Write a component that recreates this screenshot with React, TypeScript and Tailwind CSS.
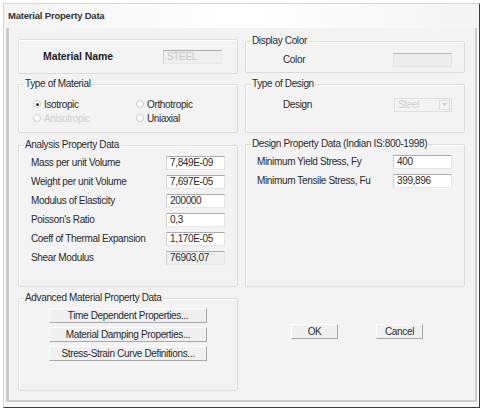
import type { ReactNode } from 'react';

const font = { fontFamily: '"Liberation Sans", Arial, sans-serif' };

function Group({ title, className, children }: { title: string; className: string; children: ReactNode }) {
  return (
    <fieldset className={`border border-[#dcdcdc] rounded-[2px] shadow-[inset_1px_1px_0_#ffffff] ${className}`}>
      <legend className="ml-[5px] px-[1px] leading-[12px] text-[#2a2a2a]">{title}</legend>
      {children}
    </fieldset>
  );
}

function Field({ value, disabled, gray }: { value: string; disabled?: boolean; gray?: boolean }) {
  return (
    <div
      className={`w-[59px] h-[14px] border border-[#e6e6e6] border-t-[#ababab] border-l-[#d2d2d2] pl-[3px] leading-[12px] ${
        gray ? 'bg-[#efefef]' : 'bg-white'
      } ${disabled ? 'text-[#c8c8c8]' : 'text-[#2a2a2a]'}`}
    >
      {value}
    </div>
  );
}

function Radio({ label, checked, disabled }: { label: string; checked?: boolean; disabled?: boolean }) {
  return (
    <div className="flex items-center h-[14px]">
      <span className="w-[8px] h-[8px] rounded-full border border-[#cacaca] bg-white flex items-center justify-center">
        {checked && <span className="w-[3px] h-[3px] rounded-full bg-[#333]" />}
      </span>
      <span className={`ml-[3px] ${disabled ? 'text-[#d0d0d0]' : 'text-[#2a2a2a]'}`}>{label}</span>
    </div>
  );
}

function Button({ label, className }: { label: string; className: string }) {
  return (
    <div
      className={`h-[15px] flex items-center justify-center bg-[#f0f0f0] border border-[#ffffff] border-r-[#a8a8a8] border-b-[#a8a8a8] text-[#2a2a2a] ${className}`}
    >
      {label}
    </div>
  );
}

const analysis = [
  { label: 'Mass per unit Volume', value: '7,849E-09' },
  { label: 'Weight per unit Volume', value: '7,697E-05' },
  { label: 'Modulus of Elasticity', value: '200000' },
  { label: "Poisson's Ratio", value: '0,3' },
  { label: 'Coeff of Thermal Expansion', value: '1,170E-05' },
];

export default function App() {
  return (
    <div className="w-[485px] h-[410px] bg-white pt-[3px] pl-[3px] pr-[5px] pb-[2px] text-[10px] tracking-[-0.35px]" style={font}>
      <div className="h-full flex flex-col border-l border-t border-[#d6d6d6] border-r border-r-[#3c3c3c] border-b border-b-[#3c3c3c] bg-[#f8f8f8]">
        <div className="h-[24px] flex items-center pl-[4px] pt-[1px] bg-gradient-to-r from-[#f4f4f4] via-[#ffffff] to-[#f4f4f4]">
          <span className="font-bold text-[9.5px] tracking-[-0.2px] text-[#333333]">Material Property Data</span>
        </div>
        <div className="flex-1 px-[2px] pb-[5px] flex">
          <div className="flex-1 flex border-l-[3px] border-r-[2px] border-b-[2px] border-[#cbcbcb] bg-[#f3f3f3] pl-[9px] gap-[7px]">
            {/* left column */}
            <div className="w-[220px] flex flex-col">
              <div className="mt-[11px] h-[35px] border border-[#dcdcdc] rounded-[2px] shadow-[inset_1px_1px_0_#ffffff] flex items-center">
                <span className="ml-[24px] w-[120px] font-bold text-[10.5px] tracking-[-0.1px] text-[#1e1e1e]">Material Name</span>
                <Field value="STEEL" disabled gray />
              </div>
              <Group title="Type of Material" className="mt-[4px] h-[55px]">
                <div className="grid grid-cols-[103px_1fr] pl-[14px] pt-[7px]">
                  <Radio label="Isotropic" checked />
                  <Radio label="Orthotropic" />
                  <Radio label="Anisotropic" disabled />
                  <Radio label="Uniaxial" />
                </div>
              </Group>
              <Group title="Analysis Property Data" className="mt-[6px] h-[148px]">
                <div className="flex flex-col pl-[12px] pt-[2px]">
                  {analysis.map((row) => (
                    <div key={row.label} className="flex items-center h-[19px]">
                      <span className="w-[135px] text-[#2a2a2a]">{row.label}</span>
                      <Field value={row.value} />
                    </div>
                  ))}
                  <div className="flex items-center h-[19px]">
                    <span className="w-[135px] text-[#2a2a2a]">Shear Modulus</span>
                    <Field value="76903,07" gray />
                  </div>
                </div>
              </Group>
              <Group title="Advanced Material Property Data" className="mt-[5px] h-[99px]">
                <div className="flex flex-col gap-[4px] pl-[30px] pt-[4px]">
                  <Button label="Time Dependent Properties..." className="w-[158px]" />
                  <Button label="Material Damping Properties..." className="w-[158px]" />
                  <Button label="Stress-Strain Curve Definitions..." className="w-[158px]" />
                </div>
              </Group>
            </div>
            {/* right column */}
            <div className="w-[220px] flex flex-col">
              <Group title="Display Color" className="mt-[7px] h-[38px]">
                <div className="flex items-center pl-[37px] pt-[5px]">
                  <span className="w-[110px] text-[#2a2a2a]">Color</span>
                  <div className="w-[59px] h-[14px] bg-[#ededed] border border-[#e4e4e4] border-t-[#b8b8b8]" />
                </div>
              </Group>
              <Group title="Type of Design" className="mt-[5px] h-[55px]">
                <div className="flex items-center pl-[37px] pt-[7px]">
                  <span className="w-[111px] text-[#2a2a2a]">Design</span>
                  <div className="w-[58px] h-[14px] bg-[#f4f4f4] border border-[#dedede] flex items-center justify-between pl-[3px] pr-[1px]">
                    <span className="text-[#d0d0d0]">Steel</span>
                    <span className="w-[11px] h-[10px] border border-[#dedede] flex items-center justify-center">
                      <svg width="5" height="3" viewBox="0 0 5 3">
                        <path d="M0 0h5L2.5 3z" fill="#c8c8c8" />
                      </svg>
                    </span>
                  </div>
                </div>
              </Group>
              <Group title="Design Property Data (Indian IS:800-1998)" className="mt-[5px] h-[149px]">
                <div className="flex flex-col pl-[11px] pt-[2px]">
                  <div className="flex items-center h-[19px]">
                    <span className="w-[136px] text-[#2a2a2a]">Minimum Yield Stress, Fy</span>
                    <Field value="400" />
                  </div>
                  <div className="flex items-center h-[19px]">
                    <span className="w-[136px] text-[#2a2a2a]">Minimum Tensile Stress, Fu</span>
                    <Field value="399,896" />
                  </div>
                </div>
              </Group>
              <div className="flex mt-[37px] pl-[46px] gap-[38px]">
                <Button label="OK" className="w-[47px]" />
                <Button label="Cancel" className="w-[47px]" />
              </div>
            </div>
          </div>
        </div>
      </div>
    </div>
  );
}
